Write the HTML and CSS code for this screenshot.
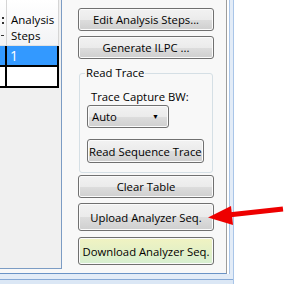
FILE: index.html
```html
<!DOCTYPE html>
<html lang="en">
<head>
    <meta charset="UTF-8">
    <title>Analyzer Sequence</title>
    <link rel="stylesheet" href="styles.css">
</head>
<body>
    <div class="window">
        <div class="client">
            <div class="grid-wrap">
                <div class="grid">
                    <div class="cell head stub"><i class="colon"></i><i class="dash"></i></div>
                    <div class="cell head"><div>Analysis</div><div>Steps</div></div>
                    <div class="cell sel"></div>
                    <div class="cell sel">1</div>
                    <div class="cell"></div>
                    <div class="cell"></div>
                </div>
            </div>
            <div class="panel">
                <button class="btn">Edit Analysis Steps...</button>
                <button class="btn btn-gen">Generate ILPC ...</button>
                <fieldset class="group">
                    <legend>Read Trace</legend>
                    <div class="label">Trace Capture BW:</div>
                    <div class="combo"><span>Auto</span><span class="caret">&#9660;</span></div>
                    <button class="btn btn-read">Read Sequence Trace</button>
                </fieldset>
                <button class="btn btn-clear">Clear Table</button>
                <button class="btn btn-tall">Upload Analyzer Seq.</button>
                <button class="btn btn-tall btn-green">Download Analyzer Seq.</button>
            </div>
        </div>
        <div class="status"></div>
    </div>

    <!-- red callout arrow pointing at the upload button -->
    <svg class="arrow" width="301" height="284" viewBox="0 0 301 284">
        <line x1="283" y1="209" x2="228" y2="215" stroke="#ee0000" stroke-width="5"/>
        <polygon points="208,217.5 231,206 233,225" fill="#ee0000"/>
    </svg>
</body>
</html>
```

FILE: styles.css
```css
body {
    margin: 0;
    background-color: #ffffff;
    font-family: 'Open Sans', 'Noto Sans', sans-serif;
    font-size: 11.3px;
    color: #000;
}
.window {
    width: 234px;
    height: 284px;
    background-color: #e3ecf7;
    border-right: 1px solid #a9c5e8;
    box-sizing: border-box;
    display: flex;
    flex-direction: column;
}
.client {
    display: flex;
    height: 274px;
    width: 227px;
    box-sizing: border-box;
    background-color: #f8f8f8;
    border-right: 1px solid #9c9c9c;
    border-bottom: 1px solid #6a93c6;
    box-shadow: 2px 0 0 #ffffff, 3px 0 0 #a9c5e8;
}
.grid-wrap {
    width: 62px;
    height: 269px;
    box-sizing: border-box;
    background-color: #f0f0f0;
    border-right: 1px solid #7c9cc4;
    border-bottom: 1px solid #7c9cc4;
}
.grid {
    display: grid;
    grid-template-columns: 7px 52px;
    grid-template-rows: 46px 21px 21px;
}
.cell {
    box-sizing: border-box;
    border-right: 2px solid #000;
    border-bottom: 2px solid #000;
    background-color: #ffffff;
    padding-left: 3px;
    font-size: 14px;
    line-height: 19px;
    overflow: hidden;
}
.cell.head {
    background: linear-gradient(#ffffff, #f2f3f5);
    border-right: 1px solid #d5d5d5;
    border-bottom: 1px solid #e2e2e2;
    font-size: 11.5px;
    line-height: 16px;
    padding: 12px 0 0 4px;
}
.cell.stub {
    position: relative;
    padding: 0;
}
/* clipped tail of the previous column's header */
.colon {
    position: absolute;
    left: 2px;
    top: 17px;
    width: 2px;
    height: 7px;
    border-top: 2px solid #333;
    border-bottom: 2px solid #333;
    box-sizing: border-box;
}
.dash {
    position: absolute;
    left: 1px;
    top: 35px;
    width: 3px;
    height: 1px;
    background-color: #333;
}
.cell.sel {
    background-color: #3399ff;
    color: #ffffff;
}
.panel {
    flex: 1;
    display: flex;
    flex-direction: column;
    align-items: stretch;
    padding: 8px 12px 0 16px;
    min-width: 0;
}
.btn {
    font-family: inherit;
    font-size: 11.3px;
    color: #000;
    height: 23px;
    padding: 0 2px;
    border: 1px solid #707070;
    border-radius: 3px;
    background: linear-gradient(#f2f2f2 0%, #ebebeb 50%, #dddddd 51%, #cfcfcf 100%);
    box-shadow: inset 0 0 0 1px #fbfbfb;
    white-space: nowrap;
    min-width: 0;
}
.btn-gen {
    margin-top: 5px;
}
.group {
    margin: 6px 1px 0 1px;
    padding: 8px 6px 9px 7px;
    border: 1px solid #d5dfe5;
    border-radius: 3px;
    display: flex;
    flex-direction: column;
    align-items: flex-start;
}
.group legend {
    padding: 0 1px;
    margin-left: -2px;
    line-height: 16px;
}
.label {
    padding-left: 4px;
    line-height: 16px;
}
.combo {
    width: 82px;
    height: 23px;
    box-sizing: border-box;
    display: flex;
    align-items: center;
    justify-content: space-between;
    padding: 0 9px 0 4px;
    border: 1px solid #707070;
    border-radius: 3px;
    background: linear-gradient(#f2f2f2 0%, #ebebeb 50%, #dddddd 51%, #cfcfcf 100%);
    box-shadow: inset 0 0 0 1px #fbfbfb;
}
.caret {
    font-size: 7px;
}
.btn-read {
    margin-top: 11px;
    height: 24px;
    padding: 0 1px;
}
.btn-clear {
    margin-top: 2px;
}
.btn-tall {
    height: 28px;
    margin-top: 5px;
}
.btn-green {
    margin-top: 6px;
    padding: 0;
    background: linear-gradient(#f1f3c2 0%, #e4f0c6 50%, #d6efd2 100%);
}
.status {
    flex: 1;
    margin-top: 5px;
    border-top: 1px solid #86a9d6;
    background-color: #dbe7f5;
}
.arrow {
    position: absolute;
    left: 0;
    top: 0;
}
```
